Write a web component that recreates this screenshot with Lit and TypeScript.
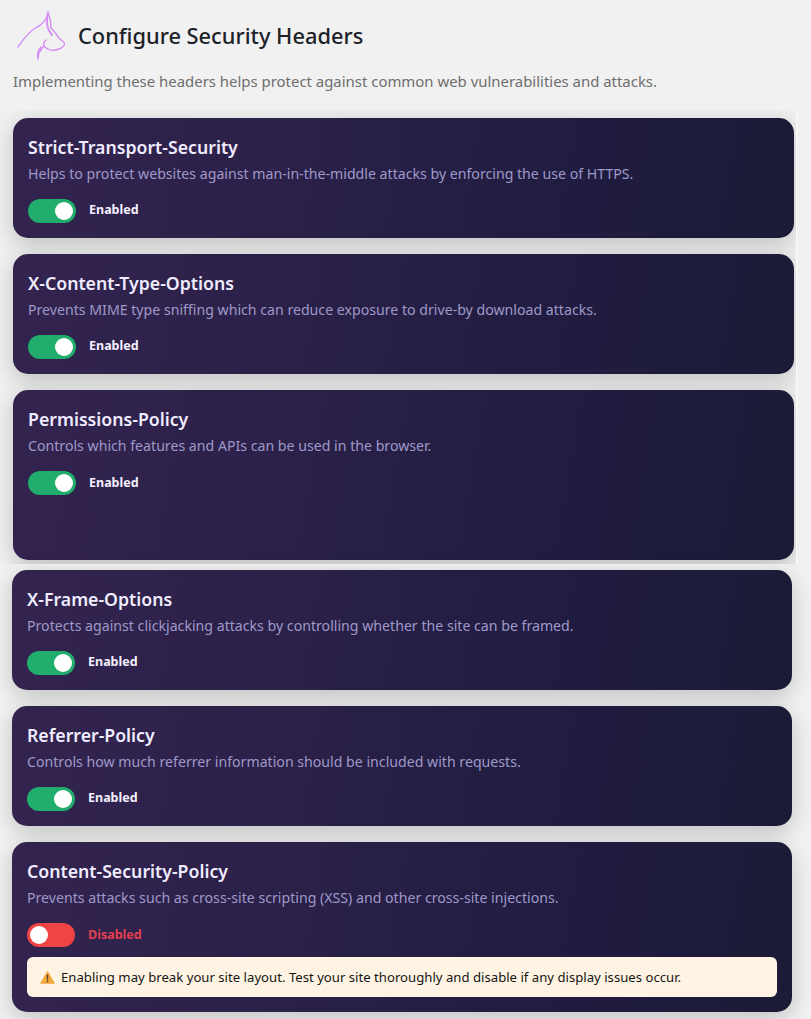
import { LitElement, html, css, svg } from "lit";
import { customElement } from "lit/decorators.js";

interface Item { name: string; desc: string; on: boolean; warn?: boolean; tall?: boolean; }

const first: Item[] = [
  { name: "Strict-Transport-Security", desc: "Helps to protect websites against man-in-the-middle attacks by enforcing the use of HTTPS.", on: true },
  { name: "X-Content-Type-Options", desc: "Prevents MIME type sniffing which can reduce exposure to drive-by download attacks.", on: true },
  { name: "Permissions-Policy", desc: "Controls which features and APIs can be used in the browser.", on: true, tall: true },
];
const second: Item[] = [
  { name: "X-Frame-Options", desc: "Protects against clickjacking attacks by controlling whether the site can be framed.", on: true },
  { name: "Referrer-Policy", desc: "Controls how much referrer information should be included with requests.", on: true },
  { name: "Content-Security-Policy", desc: "Prevents attacks such as cross-site scripting (XSS) and other cross-site injections.", on: false, warn: true, tall: true },
];

const logo = svg`<svg class="logo" viewBox="0 0 50 60" width="50" height="60" fill="none" stroke="#d58cf5" stroke-linecap="round" stroke-linejoin="round">
  <path stroke-width="1.4" d="M3 42 C9 33 15 26 22 22 C28 19 32 15 33 7 C35 12 36 17 36 23 C39 26 42 30 44 33 C46 35 48 37 50 38.5 C49 41 47 43 44 44 C40 45.5 36 46 33 44 C31 43 30 42 29 41"/>
  <path stroke-width="1.9" d="M33 8 C32 13 31 18 33 23 C34 27 36 28 37 30"/>
  <path stroke-width="1.4" d="M31 35 C29 37 28 39 29 41 C26 44 23 48 23 54 C22 50 23 45 26 42"/>
</svg>`;

const warnIcon = svg`<svg class="warn-icon" viewBox="0 0 16 14" width="15" height="13">
  <path d="M8 .6 L15.4 13.2 H.6 Z" fill="#f6a93b" stroke="#f6a93b" stroke-width="1" stroke-linejoin="round"/>
  <path d="M8 4.4 V9" stroke="#5a4a2a" stroke-width="1.6" stroke-linecap="round"/>
  <circle cx="8" cy="11.2" r=".95" fill="#5a4a2a"/>
</svg>`;

@customElement("app-root")
export class AppRoot extends LitElement {
  static styles = css`
    :host {
      display: block;
      width: 811px;
      height: 1019px;
      overflow: hidden;
      background: #f1f1f1;
      font-family: "Noto Sans", "Open Sans", sans-serif;
    }
    .header { display: flex; align-items: center; gap: 13px; padding: 8px 0 0 15px; height: 54px; }
    .logo { flex: none; }
    h1 { margin: 0; font-size: 21.8px; font-weight: 500; color: #1d2229; line-height: 30px; position: relative; top: 1px; }
    .sub { margin: 8px 0 0 13px; font-size: 14.93px; line-height: 22px; color: #6e6e6e; height: 40px; }
    .group { display: flex; flex-direction: column; gap: 16px; }
    .clip {
      width: 796px;
      padding: 8px 0 4px 0;
      overflow: hidden;
      border-right: 1px solid #fbfbfb;
      background: #f0f0f0;
    }
    .group.a { margin-left: 13px; width: 781px; }
    .group.b { margin: 6px 0 0 12px; width: 780px; }
    .card {
      box-sizing: border-box;
      height: 120px;
      border-radius: 15px;
      padding: 15px;
      background: linear-gradient(100deg, #33244f 0%, #2a2048 38%, #201c40 72%, #1b1b36 100%);
      box-shadow: 0 6px 22px rgba(0, 0, 0, 0.2);
    }
    .card.tall { height: 170px; }
    h2 { margin: 0; font-size: 17.7px; line-height: 28px; font-weight: 600; color: #f0ecff; }
    .desc { margin: 1px 0 0; font-size: 14.15px; line-height: 24px; color: #9e99c9; }
    .row { display: flex; align-items: center; gap: 13px; margin-top: 13px; height: 24px; }
    .toggle { position: relative; width: 48px; height: 24px; border-radius: 12px; background: #21ad6b; flex: none; }
    .toggle.off { background: #ef4444; }
    .knob { position: absolute; top: 3px; right: 3px; width: 18px; height: 18px; border-radius: 50%; background: #fff; }
    .off .knob { right: auto; left: 3px; }
    .state { font-size: 12.5px; font-weight: 700; color: #f4f1ff; padding-bottom: 3px; }
    .tall .state { padding-bottom: 1px; }
    .state.off { color: #e23f4c; }
    .warning {
      display: flex;
      align-items: center;
      gap: 6px;
      margin-top: 10px;
      height: 40px;
      box-sizing: border-box;
      padding: 0 13px;
      border-radius: 6px;
      background: #fff4e3;
      color: #141414;
      font-size: 13.17px;
    }
    .warn-icon { flex: none; }
  `;

  private card(i: Item) {
    return html`<div class="card ${i.tall ? "tall" : ""}">
      <h2>${i.name}</h2>
      <p class="desc">${i.desc}</p>
      <div class="row">
        <div class="toggle ${i.on ? "" : "off"}"><div class="knob"></div></div>
        <span class="state ${i.on ? "" : "off"}">${i.on ? "Enabled" : "Disabled"}</span>
      </div>
      ${i.warn ? html`<div class="warning">${warnIcon}<span>Enabling may break your site layout. Test your site thoroughly and disable if any display issues occur.</span></div>` : ""}
    </div>`;
  }

  render() {
    return html`
      <div class="header">${logo}<h1>Configure Security Headers</h1></div>
      <p class="sub">Implementing these headers helps protect against common web vulnerabilities and attacks.</p>
      <div class="clip"><div class="group a">${first.map((i) => this.card(i))}</div></div>
      <div class="group b">${second.map((i) => this.card(i))}</div>
    `;
  }
}
